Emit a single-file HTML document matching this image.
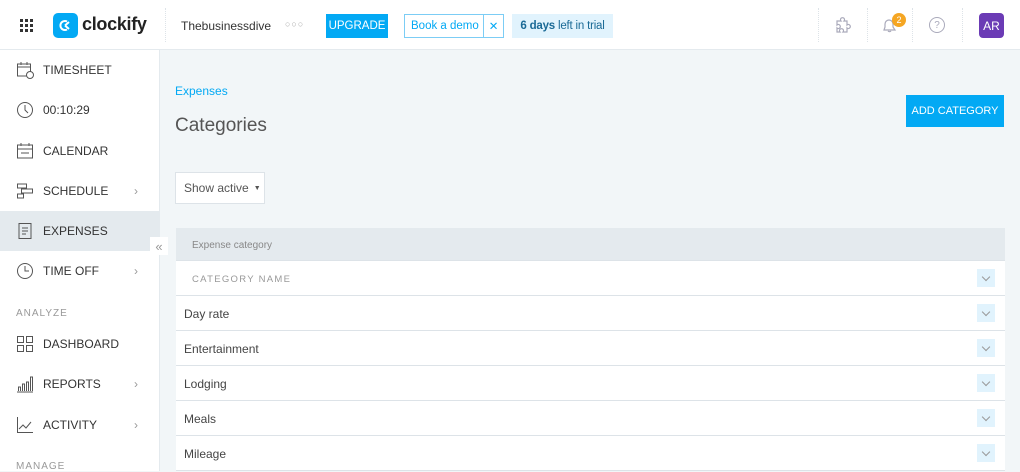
<!DOCTYPE html>
<html><head><style>
*{box-sizing:border-box;margin:0;padding:0}
body{width:1020px;height:471px;overflow:hidden;background:#f2f6f8;font-family:"Liberation Sans",sans-serif;position:relative;color:#333;white-space:nowrap}
.hdr{position:absolute;left:0;top:0;width:1020px;height:50px;background:#fff;border-bottom:1px solid #e4eaee}
.abs{position:absolute}
.side{position:absolute;left:0;top:50px;width:160px;height:421px;background:#fff;border-right:1px solid #e4eaee}
.it{position:absolute;left:0;width:159px;height:40px;display:flex;align-items:center;font-size:12px;color:#333}
.it svg{position:absolute;left:16px}
.it span{position:absolute;left:43px}
.it .ch{position:absolute;left:134px;color:#999;font-size:12px;font-style:normal}
.sec{position:absolute;left:16px;font-size:10px;letter-spacing:1px;color:#999}
.row{position:absolute;left:176px;width:829px;height:35px;background:#fff;border-bottom:1px solid #dde3e8;font-size:12px;color:#444;display:flex;align-items:center;padding-left:8px;padding-top:2px}
.dd{position:absolute;right:10px;top:8px;width:18px;height:18px;background:#e1f3fd}
.dd:after{content:"";position:absolute;left:6px;top:5px;width:5px;height:5px;border-right:1px solid #999;border-bottom:1px solid #999;transform:rotate(45deg)}
.sep{position:absolute;top:8px;height:34px;border-left:1px dotted #dde3e8}
</style></head><body>
<div class="hdr">
 <div class="abs" style="left:20px;top:19px;width:13px;height:13px;display:grid;grid-template-columns:repeat(3,3px);gap:2px">
  <i style="background:#333"></i><i style="background:#333"></i><i style="background:#333"></i><i style="background:#333"></i><i style="background:#333"></i><i style="background:#333"></i><i style="background:#333"></i><i style="background:#333"></i><i style="background:#333"></i></div>
 <div class="abs" style="left:53px;top:13px;width:25px;height:25px;background:#03a9f4;border-radius:5px"><svg width="25" height="25"><path d="M14 8.5 A4.5 4.5 0 1 0 14 16.5" fill="none" stroke="#fff" stroke-width="2"/><path d="M12 12.5 L16 9 M12 12.5 L16 16" stroke="#fff" stroke-width="2"/></svg></div>
 <div class="abs" style="left:82px;top:14px;font-size:18px;font-weight:bold;color:#222;letter-spacing:-0.3px">clockify</div>
 <div class="sep" style="left:165px"></div>
 <div class="abs" style="left:181px;top:19px;font-size:12px;color:#333">Thebusinessdive</div>
 <div class="abs" style="left:285px;top:19px;font-size:9px;color:#aaa;letter-spacing:1px">○○○</div>
 <div class="abs" style="left:326px;top:14px;width:62px;height:24px;background:#03a9f4;color:#fff;font-size:11.5px;display:flex;align-items:center;justify-content:center">UPGRADE</div>
 <div class="abs" style="left:404px;top:14px;width:100px;height:24px;border:1px solid #7ccdf5;color:#03a9f4;font-size:11.5px;display:flex;align-items:center"><span style="padding-left:6px;width:79px">Book a demo</span><span style="border-left:1px solid #7ccdf5;height:22px;width:20px;display:flex;align-items:center;justify-content:center">✕</span></div>
 <div class="abs" style="left:512px;top:14px;width:101px;height:24px;background:#e1f3fd;color:#1a6a96;font-size:11.5px;display:flex;align-items:center;justify-content:center;letter-spacing:-0.2px"><b>6 days</b>&nbsp;left in trial</div>
 <div class="sep" style="left:818px"></div><div class="sep" style="left:867px"></div><div class="sep" style="left:912px"></div><div class="sep" style="left:962px"></div>
 <svg class="abs" style="left:833px;top:16px" width="18" height="18"><path d="M4 5h4a2 2 0 1 1 3 0h3v4a2 2 0 1 1 0 3v4h-4a2 2 0 1 0-3 0H4v-4a2 2 0 1 0 0-3z" fill="none" stroke="#aab" stroke-width="1.2"/></svg>
 <svg class="abs" style="left:880px;top:16px" width="18" height="18"><path d="M4 14h11l-2-3V8a4 4 0 0 0-8 0v3z M8 15a2 2 0 0 0 3 0" fill="none" stroke="#aab" stroke-width="1.2"/></svg>
 <div class="abs" style="left:892px;top:13px;width:14px;height:14px;border-radius:50%;background:#f5a623;color:#fff;font-size:9px;display:flex;align-items:center;justify-content:center">2</div>
 <div class="abs" style="left:929px;top:17px;width:16px;height:16px;border:1.2px solid #aab;border-radius:50%;color:#aab;font-size:10px;display:flex;align-items:center;justify-content:center">?</div>
 <div class="abs" style="left:979px;top:13px;width:25px;height:25px;background:#6b3bb5;border-radius:4px;color:#fff;font-size:12px;display:flex;align-items:center;justify-content:center">AR</div>
</div>
<div class="side">
 <div class="it" style="top:0"><svg width="18" height="18"><rect x="1.5" y="3" width="13" height="12" fill="none" stroke="#555"/><path d="M1.5 6h13M5 1v3M11 1v3" stroke="#555"/><circle cx="14" cy="14" r="3.5" fill="#fff" stroke="#555"/></svg><span>TIMESHEET</span></div>
 <div class="it" style="top:40px"><svg width="18" height="18"><circle cx="9" cy="9" r="7.5" fill="none" stroke="#555"/><path d="M9 4v5l3 3" fill="none" stroke="#555"/></svg><span>00:10:29</span></div>
 <div class="it" style="top:81px"><svg width="18" height="18"><rect x="1.5" y="3" width="15" height="13" fill="none" stroke="#555"/><path d="M1.5 7h15M5 1v3M13 1v3M5 11h8" stroke="#555"/></svg><span>CALENDAR</span></div>
 <div class="it" style="top:121px"><svg width="18" height="18"><rect x="1.5" y="2" width="9" height="4" fill="none" stroke="#555"/><rect x="5.5" y="7" width="11" height="4" fill="none" stroke="#555"/><rect x="1.5" y="12" width="6" height="4" fill="none" stroke="#555"/></svg><span>SCHEDULE</span><i class="ch">›</i></div>
 <div class="it" style="top:161px;background:#e4eaee"><svg width="18" height="18"><rect x="3" y="1.5" width="12" height="15" fill="none" stroke="#555"/><path d="M6 6h6M6 9h6M6 12h4" stroke="#555"/></svg><span>EXPENSES</span></div>
 <div class="it" style="top:201px"><svg width="18" height="18"><circle cx="9" cy="9" r="7.5" fill="none" stroke="#555"/><path d="M9 4v5h4" fill="none" stroke="#555"/></svg><span>TIME OFF</span><i class="ch">›</i></div>
 <div class="sec" style="top:258px">ANALYZE</div>
 <div class="it" style="top:274px"><svg width="18" height="18"><rect x="1.5" y="1.5" width="6" height="6" fill="none" stroke="#555"/><rect x="10.5" y="1.5" width="6" height="6" fill="none" stroke="#555"/><rect x="1.5" y="10.5" width="6" height="6" fill="none" stroke="#555"/><rect x="10.5" y="10.5" width="6" height="6" fill="none" stroke="#555"/></svg><span>DASHBOARD</span></div>
 <div class="it" style="top:314px"><svg width="18" height="18"><path d="M1 17h16M2.5 16v-4h2v4M6.5 16v-7h2v7M10.5 16v-9h2v9M14.5 16V2h2v14" fill="none" stroke="#555"/></svg><span>REPORTS</span><i class="ch">›</i></div>
 <div class="it" style="top:355px"><svg width="18" height="18"><path d="M1.5 1v15.5H17M3 13l4-4 3 3 5-6" fill="none" stroke="#555"/></svg><span>ACTIVITY</span><i class="ch">›</i></div>
 <div class="sec" style="top:411px">MANAGE</div>
</div>
<div class="abs" style="left:150px;top:237px;width:18px;height:18px;background:#fff;color:#999;font-size:13px;display:flex;align-items:center;justify-content:center">«</div>
<div class="abs" style="left:175px;top:84px;font-size:12px;color:#03a9f4">Expenses</div>
<div class="abs" style="left:175px;top:115px;font-size:19px;color:#555">Categories</div>
<div class="abs" style="left:906px;top:95px;width:98px;height:32px;background:#03a9f4;color:#fff;font-size:11px;display:flex;align-items:center;justify-content:center">ADD CATEGORY</div>
<div class="abs" style="left:175px;top:172px;width:90px;height:32px;background:#fff;border:1px solid #dde3e8;font-size:12px;color:#555;display:flex;align-items:center;padding-left:8px">Show active <span style="font-size:7px;margin-left:5px">▼</span></div>
<div class="abs" style="left:176px;top:228px;width:829px;height:33px;background:#e4eaee;border-bottom:1px solid #dde3e8;font-size:10px;color:#888;padding:12px 0 0 16px">Expense category</div>
<div class="row" style="top:261px;padding-left:16px;font-size:9.5px;letter-spacing:1.3px;color:#999">CATEGORY NAME<i class="dd"></i></div>
<div class="row" style="top:296px">Day rate<i class="dd"></i></div>
<div class="row" style="top:331px">Entertainment<i class="dd"></i></div>
<div class="row" style="top:366px">Lodging<i class="dd"></i></div>
<div class="row" style="top:401px">Meals<i class="dd"></i></div>
<div class="row" style="top:436px">Mileage<i class="dd"></i></div>
</body></html>
